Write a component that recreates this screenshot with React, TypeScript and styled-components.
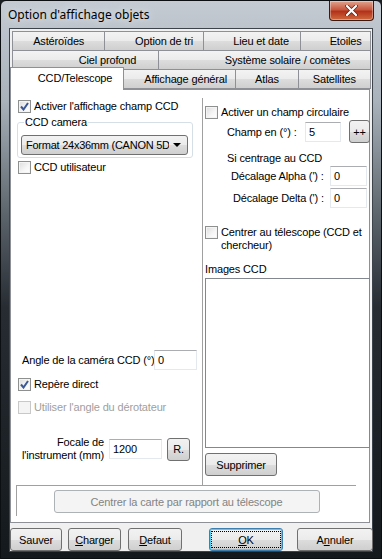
import * as React from 'react'
import styled, { createGlobalStyle, css } from 'styled-components'

const GlobalStyle = createGlobalStyle`
  html, body {
    margin: 0;
    padding: 0;
    background: #1a1f24;
  }
  body {
    font-family: 'Liberation Sans', Arial, sans-serif;
    font-size: 11px;
    letter-spacing: -0.15px;
    color: #000;
  }
`

const Window = styled.div`
  width: 382px;
  height: 559px;
  box-sizing: border-box;
  display: flex;
  flex-direction: column;
  padding: 0 8px 7px 8px;
  background: linear-gradient(
    180deg,
    #c4cbd3 0%,
    #a9b1ba 18%,
    #5d656d 38%,
    #262c32 55%,
    #14191d 100%
  );
  border: 1px solid #0c0f12;
  border-radius: 6px 6px 0 0;
  overflow: hidden;
`

const TitleBar = styled.div`
  height: 27px;
  display: flex;
  align-items: flex-start;
  justify-content: space-between;
  flex-shrink: 0;
`

const Title = styled.span`
  font-family: 'Noto Sans', 'Liberation Sans', sans-serif;
  font-size: 12px;
  letter-spacing: 0;
  margin: 5px 0 0 -1px;
  color: #000;
  text-shadow: 0 0 8px rgba(255, 255, 255, 0.9);
`

const CloseButton = styled.div`
  width: 43px;
  height: 19px;
  margin-right: -1px;
  border: 1px solid #3a1a14;
  border-top: none;
  border-radius: 0 0 4px 4px;
  background: linear-gradient(180deg, #e0a48f 0%, #c8583e 45%, #b3321a 55%, #d06a3e 100%);
  display: flex;
  align-items: center;
  justify-content: center;
  box-shadow: inset 0 0 0 1px rgba(255, 255, 255, 0.35);
`

const Client = styled.div`
  flex: 1;
  display: flex;
  flex-direction: column;
  background: #f0f0f0;
  border: 1px solid #3c434a;
  padding: 2px 1px 0 0;
`

const TabArea = styled.div`
  display: flex;
  flex-direction: column;
`

const TabRow = styled.div<{ $indent?: number }>`
  display: flex;
  padding-left: ${({ $indent }) => $indent ?? 0}px;
  margin-top: -1px;
  &:first-child {
    margin-top: 0;
  }
`

const Tab = styled.div<{ $w: number; $shift?: number; $active?: boolean }>`
  box-sizing: border-box;
  width: ${({ $w }) => $w}px;
  height: 20px;
  margin-left: -1px;
  border: 1px solid #8d9096;
  background: linear-gradient(180deg, #f3f3f3 0%, #ebebeb 50%, #dddddd 51%, #cfcfcf 100%);
  display: flex;
  align-items: center;
  justify-content: center;
  padding-left: ${({ $shift }) => ($shift ?? 0) * 2}px;
  white-space: nowrap;
  &:first-child {
    margin-left: 0;
  }
  ${({ $active }) =>
    $active &&
    css`
      background: #fff;
      height: 23px;
      margin-top: -2px;
      margin-bottom: -1px;
      border-bottom: none;
      position: relative;
      z-index: 1;
      padding-bottom: 2px;
    `}
`

const Sheet = styled.div`
  height: 434px;
  box-sizing: border-box;
  border: 1px solid #8d9096;
  background: #fff;
  margin-right: 1px;
  display: flex;
  flex-direction: column;
  padding: 8px 4px 0 5px;
`

const Columns = styled.div`
  display: grid;
  grid-template-columns: 186px 1fr;
  height: 387px;
`

const LeftCol = styled.div`
  display: flex;
  flex-direction: column;
  padding: 0 0 0 2px;
`

const RightCol = styled.div`
  display: flex;
  flex-direction: column;
  border-left: 1px solid #a0a0a0;
  padding: 6px 0 0 2px;
`

const CheckRow = styled.label<{ $disabled?: boolean; $top?: number }>`
  display: flex;
  align-items: flex-start;
  gap: 3px;
  margin-top: ${({ $top }) => $top ?? 0}px;
  color: ${({ $disabled }) => ($disabled ? '#a0a0a0' : '#000')};
  line-height: 13px;
`

const Box = styled.span<{ $disabled?: boolean }>`
  flex-shrink: 0;
  width: 13px;
  height: 13px;
  box-sizing: border-box;
  border: 1px solid ${({ $disabled }) => ($disabled ? '#c8c8c8' : '#8e8f8f')};
  background: ${({ $disabled }) =>
    $disabled ? '#f4f4f4' : 'linear-gradient(135deg, #dcdcdc 0%, #f6f6f6 60%, #fff 100%)'};
  box-shadow: inset 0 0 0 1px #f4f4f4;
  display: flex;
  align-items: center;
  justify-content: center;
`

const GroupBox = styled.fieldset`
  margin: 3px 0 0 -1px;
  padding: 0 4px 2px 3px;
  border: 1px solid #d5dfe5;
  border-radius: 3px;
  width: 176px;
  box-sizing: border-box;
  min-width: 0;
`

const Legend = styled.legend`
  padding: 0 1px;
  margin-left: 3px;
`

const Combo = styled.div`
  height: 20px;
  box-sizing: border-box;
  border: 1px solid #707070;
  border-radius: 3px;
  background: linear-gradient(180deg, #f2f2f2 0%, #ebebeb 50%, #dddddd 51%, #cfcfcf 100%);
  display: flex;
  align-items: center;
  padding-left: 4px;
  margin-top: 7px;
  overflow: hidden;
  white-space: nowrap;
`

const ComboText = styled.span`
  flex: 1;
  overflow: hidden;
  letter-spacing: -0.25px;
`

const ComboArrow = styled.span`
  width: 0;
  height: 0;
  margin: 0 6px 0 4px;
  border-left: 4px solid transparent;
  border-right: 4px solid transparent;
  border-top: 4px solid #000;
`

const FieldRow = styled.div<{ $indent?: number; $top?: number }>`
  display: flex;
  align-items: center;
  padding-left: ${({ $indent }) => $indent ?? 0}px;
  margin-top: ${({ $top }) => $top ?? 0}px;
  white-space: nowrap;
`

const FieldLabel = styled.span<{ $w: number }>`
  width: ${({ $w }) => $w}px;
  flex-shrink: 0;
`

const Edit = styled.div<{ $w: number; $gap?: number }>`
  width: ${({ $w }) => $w}px;
  height: 20px;
  box-sizing: border-box;
  margin-left: ${({ $gap }) => $gap ?? 0}px;
  border: 1px solid #e3e9ef;
  border-top-color: #abadb3;
  background: #fff;
  padding: 2px 0 0 3px;
  line-height: 14px;
`

const Button = styled.div<{ $w: number; $gap?: number; $disabled?: boolean; $focus?: boolean }>`
  width: ${({ $w }) => $w}px;
  height: 23px;
  box-sizing: border-box;
  margin-left: ${({ $gap }) => $gap ?? 0}px;
  border: 1px solid ${({ $disabled }) => ($disabled ? '#adb2b5' : '#707070')};
  border-radius: 3px;
  background: ${({ $disabled }) =>
    $disabled ? '#f4f4f4' : 'linear-gradient(180deg, #f2f2f2 0%, #ebebeb 50%, #dddddd 51%, #cfcfcf 100%)'};
  color: ${({ $disabled }) => ($disabled ? '#838383' : '#000')};
  display: flex;
  align-items: center;
  justify-content: center;
  white-space: nowrap;
  flex-shrink: 0;
  ${({ $focus }) =>
    $focus &&
    css`
      border-color: #3c7fb1;
      box-shadow: inset 0 0 0 1px #48d0f8;
    `}
`

const FocusRing = styled.span`
  outline: 1px dotted #000;
  width: 68px;
  height: 15px;
  display: flex;
  align-items: center;
  justify-content: center;
`

const Spacer = styled.div<{ $h?: number }>`
  flex: ${({ $h }) => ($h === undefined ? '1' : `0 0 ${$h}px`)};
`

const FocalLabel = styled.div`
  width: 86px;
  flex-shrink: 0;
  text-align: right;
  line-height: 13px;
`

const Caption = styled.div<{ $indent?: number; $top?: number }>`
  padding-left: ${({ $indent }) => $indent ?? 0}px;
  margin-top: ${({ $top }) => $top ?? 0}px;
`

const ListBox = styled.div`
  height: 170px;
  width: 165px;
  box-sizing: border-box;
  margin-top: 3px;
  border: 1px solid #828790;
  background: #fff;
`

const BottomPanel = styled.div`
  flex: 1;
  border-top: 1px solid #a0a0a0;
  border-left: 1px solid #a0a0a0;
  margin: 0 9px 6px 0;
  display: flex;
  align-items: flex-start;
  justify-content: center;
  padding-top: 4px;
`

const ButtonBar = styled.div`
  display: flex;
  align-items: center;
  padding: 5px 0 0 0;
`

const U = styled.span`
  text-decoration: underline;
`

function Check({ checked, disabled }: { checked?: boolean; disabled?: boolean }) {
  return (
    <Box $disabled={disabled}>
      {checked && (
        <svg width="9" height="9" viewBox="0 0 9 9">
          <path d="M1 4.5 L3.5 7.5 L8 1" fill="none" stroke="#3b5796" strokeWidth="2" />
        </svg>
      )}
    </Box>
  )
}

export default function App() {
  return (
    <>
      <GlobalStyle />
      <Window>
        <TitleBar>
          <Title>Option d'affichage objets</Title>
          <CloseButton>
            <svg width="13" height="11" viewBox="0 0 13 11">
              <path
                d="M2 1 L11 10 M11 1 L2 10"
                stroke="#4a2a20"
                strokeWidth="3.6"
                strokeLinecap="round"
              />
              <path
                d="M2 1 L11 10 M11 1 L2 10"
                stroke="#fff"
                strokeWidth="2.2"
                strokeLinecap="round"
              />
            </svg>
          </CloseButton>
        </TitleBar>
        <Client>
          <TabArea>
            <TabRow $indent={2}>
              <Tab $w={94}>Astéroïdes</Tab>
              <Tab $w={100} $shift={10}>Option de tri</Tab>
              <Tab $w={99} $shift={9}>Lieu et date</Tab>
              <Tab $w={71} $shift={10}>Etoiles</Tab>
            </TabRow>
            <TabRow $indent={2}>
              <Tab $w={148} $shift={22}>Ciel profond</Tab>
              <Tab $w={215} $shift={23}>Système solaire / comètes</Tab>
            </TabRow>
            <TabRow>
              <Tab $w={115} $shift={8} $active>
                CCD/Telescope
              </Tab>
              <Tab $w={114} $shift={6}>Affichage général</Tab>
              <Tab $w={64} $shift={-2}>Atlas</Tab>
              <Tab $w={74}>Satellites</Tab>
            </TabRow>
          </TabArea>
          <Sheet>
            <Columns>
              <LeftCol>
                <CheckRow $top={2}>
                  <Check checked />
                  Activer l'affichage champ CCD
                </CheckRow>
                <GroupBox>
                  <Legend>CCD camera</Legend>
                  <Combo>
                    <ComboText>Format 24x36mm (CANON 5D/</ComboText>
                    <ComboArrow />
                  </Combo>
                </GroupBox>
                <CheckRow $top={3}>
                  <Check />
                  CCD utilisateur
                </CheckRow>
                <Spacer />
                <FieldRow $indent={4}>
                  <FieldLabel $w={132}>Angle de la caméra CCD (°)</FieldLabel>
                  <Edit $w={43}>0</Edit>
                </FieldRow>
                <CheckRow $top={8}>
                  <Check checked />
                  Repère direct
                </CheckRow>
                <CheckRow $top={10} $disabled>
                  <Check disabled />
                  Utiliser l'angle du dérotateur
                </CheckRow>
                <FieldRow $top={22}>
                  <FocalLabel>
                    Focale de
                    <br />
                    l'instrument (mm)
                  </FocalLabel>
                  <Edit $w={53} $gap={5}>1200</Edit>
                  <Button $w={23} $gap={5}>R.</Button>
                </FieldRow>
                <Spacer $h={23} />
              </LeftCol>
              <RightCol>
                <CheckRow $top={2}>
                  <Check />
                  Activer un champ circulaire
                </CheckRow>
                <FieldRow $indent={22} $top={1}>
                  <FieldLabel $w={78}>Champ en (°) :</FieldLabel>
                  <Edit $w={36}>5</Edit>
                  <Button $w={21} $gap={8}>++</Button>
                </FieldRow>
                <Caption $indent={22} $top={9}>
                  Si centrage au CCD
                </Caption>
                <FieldRow $indent={26} $top={2}>
                  <FieldLabel $w={99}>Décalage Alpha (') :</FieldLabel>
                  <Edit $w={37}>0</Edit>
                </FieldRow>
                <FieldRow $indent={28} $top={2}>
                  <FieldLabel $w={97}>Décalage Delta (') :</FieldLabel>
                  <Edit $w={37}>0</Edit>
                </FieldRow>
                <CheckRow $top={18}>
                  <Check />
                  <span>
                    Centrer au télescope (CCD et
                    <br />
                    chercheur)
                  </span>
                </CheckRow>
                <Caption $top={11}>Images CCD</Caption>
                <ListBox />
                <FieldRow $top={5}>
                  <Button $w={72}>Supprimer</Button>
                </FieldRow>
              </RightCol>
            </Columns>
            <BottomPanel>
              <Button $w={266} $disabled>
                Centrer la carte par rapport au télescope
              </Button>
            </BottomPanel>
          </Sheet>
          <ButtonBar>
            <Button $w={52}>Sauver</Button>
            <Button $w={53} $gap={6}>
              <U>C</U>harger
            </Button>
            <Button $w={54} $gap={7}>
              <U>D</U>efaut
            </Button>
            <Button $w={74} $gap={27} $focus>
              <FocusRing>
                <U>O</U>K
              </FocusRing>
            </Button>
            <Button $w={76} $gap={14}>
              A<U>n</U>nuler
            </Button>
          </ButtonBar>
        </Client>
      </Window>
    </>
  )
}
